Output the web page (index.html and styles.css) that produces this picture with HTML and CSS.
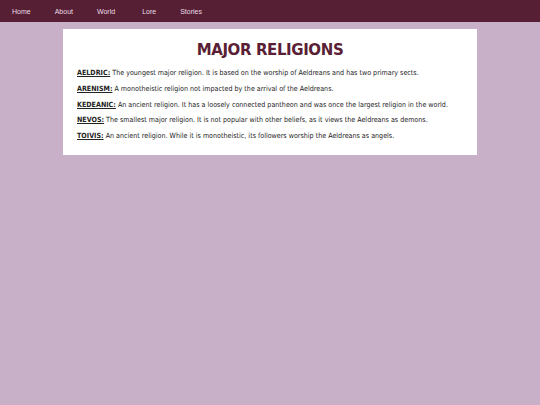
FILE: index.html
```html
<!DOCTYPE html>
<html lang="en">
<head>
    <meta charset="UTF-8">
    <meta name="viewport" content="width=device-width, initial-scale=1.0">
    <title>Major Religions</title>
    <link rel="stylesheet" href="styles.css">
</head>
<body>
    <nav class="topnav">
        <a href="#">Home</a>
        <a href="#">About</a>
        <a href="#">World</a>
        <a href="#">Lore</a>
        <a href="#">Stories</a>
    </nav>

    <div class="container">
        <h1>MAJOR RELIGIONS</h1>

        <p><span class="term">AELDRIC:</span> The youngest major religion. It is based on the worship of Aeldreans and has two primary sects.</p>
        <p><span class="term">ARENISM:</span> A monotheistic religion not impacted by the arrival of the Aeldreans.</p>
        <p><span class="term">KEDEANIC:</span> An ancient religion. It has a loosely connected pantheon and was once the largest religion in the world.</p>
        <p><span class="term">NEVOS:</span> The smallest major religion. It is not popular with other beliefs, as it views the Aeldreans as demons.</p>
        <p><span class="term">TOIVIS:</span> An ancient religion. While it is monotheistic, its followers worship the Aeldreans as angels.</p>
    </div>
</body>
</html>
```

FILE: styles.css
```css
* {
    margin: 0;
    padding: 0;
    box-sizing: border-box;
}

body {
    font-family: "DejaVu Sans Condensed", "DejaVu Sans", Verdana, sans-serif;
    background: #c9b0c9;
    color: #222;
    min-height: 100vh;
}

.topnav {
    background: #561f34;
    height: 22px;
    display: flex;
    align-items: center;
}

.topnav a {
    font-family: "Liberation Sans", Arial, sans-serif;
    font-size: 7px;
    color: #eadde6;
    text-decoration: none;
    padding: 0 12px;
}

.topnav a:nth-child(3) {
    padding-right: 15px;
}

.container {
    background: white;
    width: 414px;
    margin: 7px auto 0;
    padding: 12px 14px 15px;
}

h1 {
    font-family: "DejaVu Sans", Verdana, sans-serif;
    text-align: center;
    font-size: 15px;
    letter-spacing: -0.4px;
    color: #5a1f35;
    margin-bottom: 9px;
}

p {
    font-size: 7.1px;
    line-height: 9px;
    margin-bottom: 6.8px;
}

p:last-child {
    margin-bottom: 0;
}

.term {
    font-weight: bold;
    text-decoration: underline;
}
```
